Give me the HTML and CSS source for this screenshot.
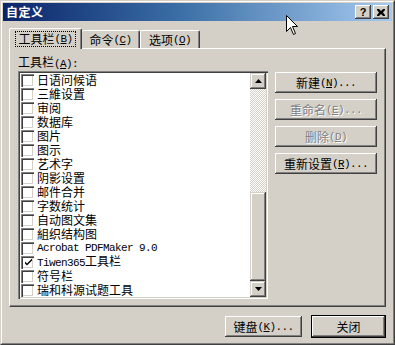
FILE: index.html
```html
<!DOCTYPE html>
<html lang="zh-CN">
<head>
<meta charset="utf-8">
<title>自定义</title>
<link rel="stylesheet" href="styles.css">
</head>
<body>
<div class="window">
  <div class="frame">
    <div class="titlebar">
      <span class="title">自定义</span>
      <div class="tb-btns">
        <div class="tb-btn help">?</div>
        <div class="tb-btn">
          <svg width="8" height="7" viewBox="0 0 8 7"><path d="M0 0h2l2 2 2-2h2v1l-2 2.5 2 2.5v1h-2l-2-2-2 2h-2v-1l2-2.5-2-2.5z" fill="#000"/></svg>
        </div>
      </div>
    </div>
    <div class="content">
      <div class="tabs">
        <div class="tab sel"><span class="focus">工具栏<span class="lat">(<u>B</u>)</span></span></div>
        <div class="tab t2">命令<span class="lat">(<u>C</u>)</span></div>
        <div class="tab t3">选项<span class="lat">(<u>O</u>)</span></div>
      </div>
      <div class="panel">
        <div class="left">
          <div class="label">工具栏<span class="lat">(<u>A</u>):</span></div>
          <div class="listbox">
            <div class="items">
              <div class="item"><span class="cb"></span><span>日语问候语</span></div>
              <div class="item"><span class="cb"></span><span>三維设置</span></div>
              <div class="item"><span class="cb"></span><span>审阅</span></div>
              <div class="item"><span class="cb"></span><span>数据库</span></div>
              <div class="item"><span class="cb"></span><span>图片</span></div>
              <div class="item"><span class="cb"></span><span>图示</span></div>
              <div class="item"><span class="cb"></span><span>艺术字</span></div>
              <div class="item"><span class="cb"></span><span>阴影设置</span></div>
              <div class="item"><span class="cb"></span><span>邮件合并</span></div>
              <div class="item"><span class="cb"></span><span>字数统计</span></div>
              <div class="item"><span class="cb"></span><span>自动图文集</span></div>
              <div class="item"><span class="cb"></span><span>組织结构图</span></div>
              <div class="item"><span class="cb"></span><span class="lat">Acrobat PDFMaker 9.0</span></div>
              <div class="item"><span class="cb"><svg width="9" height="9" viewBox="0 0 9 9"><path d="M1 3.5l2 2 5-5v2l-5 5-2-2z" fill="#000"/></svg></span><span><span class="lat">Tiwen365</span>工具栏</span></div>
              <div class="item"><span class="cb"></span><span>符号栏</span></div>
              <div class="item"><span class="cb"></span><span>瑞和科源试题工具</span></div>
            </div>
            <div class="scrollbar">
              <div class="sbtn"><svg width="7" height="4" viewBox="0 0 7 4"><path d="M3.5 0L7 4H0z" fill="#000"/></svg></div>
              <div class="track"></div>
              <div class="thumb"></div>
              <div class="sbtn"><svg width="7" height="4" viewBox="0 0 7 4"><path d="M0 0h7L3.5 4z" fill="#000"/></svg></div>
            </div>
          </div>
        </div>
        <div class="side">
          <div class="btn">新建<span class="lat">(<u>N</u>)...</span></div>
          <div class="btn dis">重命名<span class="lat">(<u>E</u>)...</span></div>
          <div class="btn dis">删除<span class="lat">(<u>D</u>)</span></div>
          <div class="btn">重新设置<span class="lat">(<u>R</u>)...</span></div>
        </div>
      </div>
      <div class="footer">
        <div class="btn kb">键盘<span class="lat">(<u>K</u>)...</span></div>
        <div class="btn def">关闭</div>
      </div>
    </div>
  </div>
  <svg class="cursor" width="13" height="21" viewBox="0 0 13 21"><path d="M0.5 0.5V16.5L4.5 12.5L7.5 19.5L9.5 18.5L6.5 11.5H11.5Z" fill="#fff" stroke="#000" stroke-width="1"/></svg>
</div>
</body>
</html>
```
FILE: styles.css
```css
html, body {
  margin: 0;
  padding: 0;
  background: #D4D0C8;
}
body {
  font-family: "Noto Sans CJK SC", "Liberation Sans", sans-serif;
  font-size: 12px;
  color: #000;
}
.window {
  position: relative;
  width: 395px;
  height: 345px;
  box-sizing: border-box;
  border: 1px solid;
  border-color: #D4D0C8 #404040 #404040 #D4D0C8;
  background: #D4D0C8;
}
.frame {
  height: 100%;
  box-sizing: border-box;
  border: 1px solid;
  border-color: #fff #808080 #808080 #fff;
  padding: 1px;
  display: flex;
  flex-direction: column;
}
.titlebar {
  height: 18px;
  flex: none;
  display: flex;
  align-items: center;
  justify-content: space-between;
  padding: 0 3px 0 3px;
  background: linear-gradient(to right, #0A246A 0%, #3A6EA5 45%, #A6CAF0 100%);
}
.title {
  color: #fff;
  font-weight: bold;
  font-size: 12px;
  line-height: 14px;
  letter-spacing: 0.5px;
}
.tb-btns {
  display: flex;
  gap: 2px;
}
.tb-btn {
  width: 16px;
  height: 14px;
  box-sizing: border-box;
  background: #D4D0C8;
  box-shadow: inset -1px -1px #404040, inset 1px 1px #fff, inset -2px -2px #808080, inset 2px 2px #D4D0C8;
  display: flex;
  align-items: center;
  justify-content: center;
}
.help {
  font-family: "Liberation Sans", sans-serif;
  font-weight: bold;
  font-size: 11px;
  line-height: 12px;
  padding-bottom: 1px;
}
.content {
  flex: 1;
  padding: 7px 6px 0 6px;
  display: flex;
  flex-direction: column;
}
.lat {
  font-family: "Liberation Mono", monospace;
  font-size: 11px;
  letter-spacing: -0.6px;
}
u {
  text-decoration-thickness: 1px;
  text-underline-offset: 1px;
}
.tabs {
  display: flex;
  align-items: flex-end;
  height: 20px;
  position: relative;
  z-index: 1;
}
.tab {
  height: 18px;
  box-sizing: border-box;
  border-top: 1px solid #fff;
  border-left: 1px solid #fff;
  border-right: 1px solid #404040;
  box-shadow: inset -1px 0 #808080;
  border-radius: 2px 2px 0 0;
  display: flex;
  align-items: center;
  justify-content: center;
  line-height: 14px;
  background: #D4D0C8;
}
.tab.sel {
  width: 73px;
  height: 21px;
  margin-bottom: -1px;
  padding-bottom: 1px;
}
.t2 { width: 58px; border-left: none; }
.t3 { width: 60px; }
.focus {
  outline: 1px dotted #000;
  padding: 0 2px;
  height: 14px;
  display: flex;
  align-items: center;
}
.panel {
  height: 259px;
  box-sizing: border-box;
  border: 1px solid;
  border-color: #fff #404040 #404040 #fff;
  box-shadow: inset -1px -1px #808080;
  padding: 6px 8px 0 8px;
  display: flex;
  gap: 7px;
}
.label {
  line-height: 14px;
  height: 14px;
  margin-bottom: 2px;
}
.listbox {
  width: 250px;
  height: 228px;
  box-sizing: border-box;
  box-shadow: inset 1px 1px #808080, inset 2px 2px #404040, inset -1px -1px #fff, inset -2px -2px #D4D0C8;
  background: #fff;
  padding: 2px;
  display: flex;
}
.items {
  flex: 1;
}
.item {
  height: 14px;
  display: flex;
  align-items: center;
  gap: 3px;
  padding-left: 1px;
  line-height: 14px;
  white-space: nowrap;
}
.cb {
  width: 13px;
  height: 13px;
  flex: none;
  box-sizing: border-box;
  background: #fff;
  box-shadow: inset 1px 1px #808080, inset 2px 2px #404040, inset -1px -1px #fff, inset -2px -2px #D4D0C8;
  display: flex;
  align-items: center;
  justify-content: center;
}
.cb svg {
  margin-left: 1px;
  margin-top: 1px;
}
.scrollbar {
  width: 16px;
  display: flex;
  flex-direction: column;
}
.sbtn {
  width: 16px;
  height: 16px;
  box-sizing: border-box;
  background: #D4D0C8;
  box-shadow: inset -1px -1px #404040, inset 1px 1px #D4D0C8, inset -2px -2px #808080, inset 2px 2px #fff;
  display: flex;
  align-items: center;
  justify-content: center;
}
.track {
  height: 103px;
  background: conic-gradient(#fff 25%, #D4D0C8 0 50%, #fff 0 75%, #D4D0C8 0);
  background-size: 2px 2px;
}
.thumb {
  height: 89px;
  background: #D4D0C8;
  box-shadow: inset -1px -1px #404040, inset 1px 1px #D4D0C8, inset -2px -2px #808080, inset 2px 2px #fff;
}
.side {
  display: flex;
  flex-direction: column;
  gap: 6px;
  padding-top: 17px;
}
.btn {
  width: 102px;
  height: 21px;
  box-sizing: border-box;
  background: #D4D0C8;
  box-shadow: inset -1px -1px #404040, inset 1px 1px #fff, inset -2px -2px #808080, inset 2px 2px #D4D0C8;
  display: flex;
  align-items: center;
  justify-content: center;
  line-height: 14px;
  white-space: nowrap;
}
.btn.dis {
  color: #808080;
  text-shadow: 1px 1px #fff;
}
.footer {
  display: flex;
  justify-content: flex-end;
  align-items: center;
  gap: 9px;
  margin-top: 8px;
}
.btn.kb {
  width: 77px;
}
.btn.def {
  width: 75px;
  height: 23px;
  border: 1px solid #000;
}
.cursor {
  position: absolute;
  left: 285px;
  top: 14px;
}
```
